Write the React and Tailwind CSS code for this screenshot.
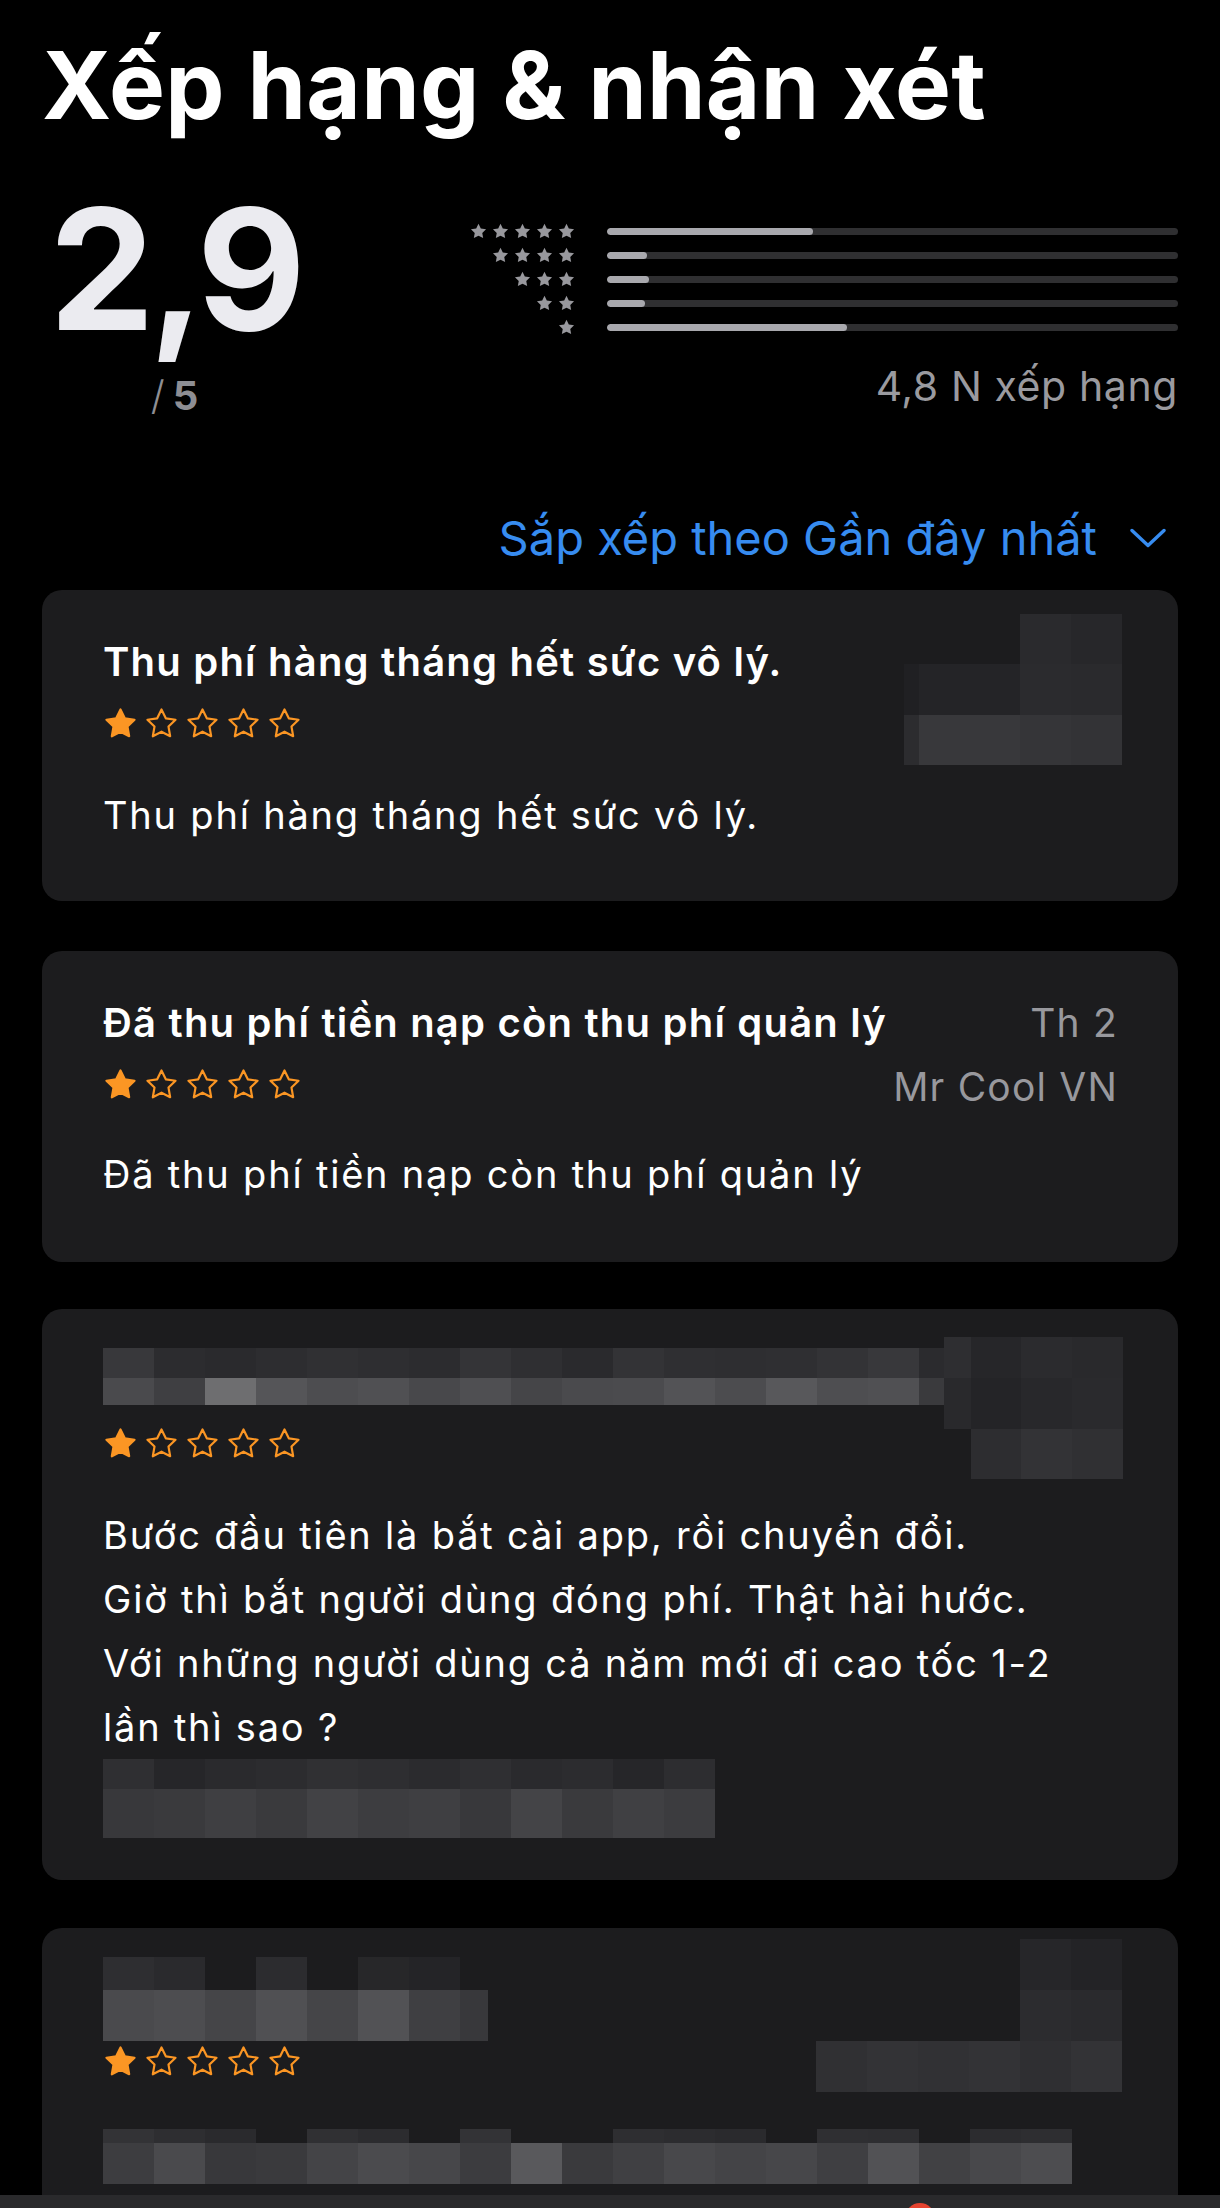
import React from 'react';

const STAR = 'M12 2.2l2.95 6.1 6.7.95-4.85 4.7 1.15 6.65L12 17.45l-5.95 3.15 1.15-6.65-4.85-4.7 6.7-.95L12 2.2z';

const ratingBars = [36, 7, 7.3, 6.6, 42];

// pixelated (censored) blocks, each row: height + list of [width, colour]
const blurCard1 = [
  { h: 50, t: [[116, null], [51, '#2a2a2d'], [51, '#27272a']] },
  { h: 51, t: [[15, '#202023'], [101, '#242427'], [51, '#2b2b2e'], [51, '#2a2a2d']] },
  { h: 50, t: [[15, '#2c2c2f'], [101, '#38383b'], [51, '#353538'], [51, '#333336']] },
];

const titleBlur3 = [
  {
    h: 30,
    t: ['#38383b', '#2c2c2f', '#2a2a2d', '#2d2d30', '#303033', '#2e2e31', '#2c2c2f', '#343437', '#2f2f32', '#2a2a2d', '#333336', '#2f2f32', '#2e2e31', '#2f2f32', '#333336', '#38383b'].map((c) => [51, c]).concat([[25, '#2b2b2e']]),
  },
  {
    h: 27,
    t: ['#4a4a4d', '#3f3f42', '#6e6e70', '#555558', '#4d4d50', '#505053', '#48484b', '#4f4f52', '#454548', '#4a4a4d', '#4b4b4e', '#535356', '#4c4c4f', '#58585b', '#4e4e51', '#505053'].map((c) => [51, c]).concat([[25, '#3a3a3d']]),
  },
];

const sideBlur3 = [
  { h: 41, t: [[27, '#2e2e31'], [50, '#262629'], [51, '#2b2b2e'], [51, '#29292c']] },
  { h: 51, t: [[27, '#29292c'], [50, '#242427'], [51, '#28282b'], [51, '#2a2a2d']] },
  { h: 50, t: [[27, null], [50, '#2d2d30'], [51, '#333336'], [51, '#303033']] },
];

const footBlur3 = [
  { h: 30, t: ['#2f2f32', '#262629', '#2a2a2d', '#2c2c2f', '#303033', '#2e2e31', '#2b2b2e', '#2f2f32', '#2a2a2d', '#2c2c2f', '#262629', '#2d2d30'].map((c) => [51, c]) },
  { h: 49, t: ['#38383b', '#3a3a3d', '#3f3f42', '#3a3a3d', '#424245', '#3d3d40', '#3f3f42', '#38383b', '#444447', '#3a3a3d', '#404043', '#3c3c3f'].map((c) => [51, c]) },
];

const titleBlur4 = [
  { h: 33, t: [[51, '#2e2e31'], [51, '#2a2a2d'], [51, null], [51, '#2c2c2f'], [51, null], [51, '#272729'], [51, '#242427'], [28, null]] },
  { h: 51, t: [[51, '#4a4a4d'], [51, '#4d4d50'], [51, '#454548'], [51, '#505053'], [51, '#454548'], [51, '#525255'], [51, '#3f3f42'], [28, '#38383b']] },
];

const sideBlur4 = [
  { h: 51, t: [[204, null], [51, '#262629'], [51, '#232326']] },
  { h: 51, t: [[204, null], [51, '#2c2c2f'], [51, '#2a2a2d']] },
  { h: 51, t: [[51, '#303033'], [51, '#333336'], [51, '#313134'], [51, '#333336'], [51, '#2f2f32'], [51, '#333336']] },
];

const lineBlur4 = [
  { h: 14, t: ['#333336', '#2e2e31', '#2a2a2d', null, '#303033', '#2c2c2f', null, '#333336', null, null, '#2e2e31', '#2c2c2f', '#2a2a2d', null, '#2f2f32', '#2e2e31', null, '#2c2c2f', '#2e2e31'].map((c) => [51, c]) },
  { h: 41, t: ['#3d3d40', '#4a4a4d', '#38383b', '#3a3a3d', '#444447', '#4b4b4e', '#47474a', '#3c3c3f', '#59595c', '#3a3a3d', '#404043', '#48484b', '#444447', '#47474a', '#3f3f42', '#525255', '#414144', '#48484b', '#4d4d50'].map((c) => [51, c]) },
];

const Pixels = ({ rows }) => (
  <div className="flex flex-col shrink-0">
    {rows.map((row, i) => (
      <div key={i} className="flex" style={{ height: row.h }}>
        {row.t.map(([w, c], j) => (
          <div key={j} style={{ width: w, background: c || 'transparent' }} />
        ))}
      </div>
    ))}
  </div>
);

const OrangeStars = () => (
  <div className="flex gap-[6px] h-[33px] items-center">
    {[0, 1, 2, 3, 4].map((i) => (
      <svg key={i} width="35" height="34" viewBox="0 0 24 23">
        <path
          d={STAR}
          fill={i === 0 ? '#fb9624' : 'none'}
          stroke="#fb9624"
          strokeWidth="1.5"
          strokeLinejoin="round"
        />
      </svg>
    ))}
  </div>
);

const GrayStars = ({ n }) => (
  <div className="flex gap-[3px]">
    {Array.from({ length: n }).map((_, i) => (
      <svg key={i} width="19" height="18" viewBox="0 0 24 23">
        <path d={STAR} fill="#98989d" />
      </svg>
    ))}
  </div>
);

const Card = ({ children, className = '' }) => (
  <div className={`bg-[#1c1c1e] pl-[61px] pr-[56px] ${className}`}>{children}</div>
);

const titleCls = 'text-[40px] leading-[46px] font-semibold tracking-[1.2px] whitespace-nowrap';
const bodyCls = 'text-[38px] tracking-[1.8px] whitespace-nowrap';

const App = () => {
  return (
    <div
      className="h-[2208px] overflow-hidden bg-black flex flex-col text-white"
      style={{ fontFamily: 'Inter, "Noto Sans", sans-serif' }}
    >
      <div className="flex-1 flex flex-col px-[42px] pt-[38px] min-h-0">
        {/* Heading */}
        <h1 className="text-[94px] leading-[94px] font-bold tracking-[0.3px] whitespace-nowrap">
          Xếp hạng &amp; nhận xét
        </h1>

        {/* Summary */}
        <div className="mt-[57px] flex">
          <div className="w-[265px] flex flex-col items-center">
            <div className="-mt-[4px] text-[168px] leading-[168px] font-bold tracking-[-6px] text-[#ebebf0]">2,9</div>
            <div className="mt-[23px] flex items-baseline text-[40px] leading-[40px] text-[#8e8e93]">
              <span className="font-light">/</span>
              <span className="ml-[8px] font-bold">5</span>
            </div>
          </div>
          <div className="flex-1 flex flex-col pt-[30px]">
            {ratingBars.map((pct, i) => (
              <div key={i} className="h-[24px] flex items-center">
                <div className="w-[269px] flex justify-end">
                  <GrayStars n={5 - i} />
                </div>
                <div className="ml-[31px] flex-1 h-[7px] rounded-full bg-[#2f2f31] overflow-hidden">
                  <div className="h-full rounded-full bg-[#a8a8ad]" style={{ width: `${pct}%` }} />
                </div>
              </div>
            ))}
            <div className="mt-[27px] text-right text-[41px] leading-[41px] tracking-[0.6px] text-[#9a9a9f] whitespace-nowrap">
              4,8 N xếp hạng
            </div>
          </div>
        </div>

        {/* Sort */}
        <div className="mt-[98px] flex justify-end items-center text-[#378cf0]">
          <span className="text-[47px] leading-[47px] whitespace-nowrap">Sắp xếp theo Gần đây nhất</span>
          <svg className="ml-[33px] mr-[12px]" width="36" height="20" viewBox="0 0 36 20" fill="none">
            <path d="M2 2.5l16 15 16-15" stroke="#378cf0" strokeWidth="3.4" strokeLinecap="round" strokeLinejoin="round" />
          </svg>
        </div>

        {/* Review 1 */}
        <Card className="mt-[29px] rounded-[20px] pt-[24px] pb-[54px]">
          <div className="flex justify-between">
            <div className="pt-[25px]">
              <div className={titleCls}>Thu phí hàng tháng hết sức vô lý.</div>
              <div className="mt-[21px]">
                <OrangeStars />
              </div>
            </div>
            <Pixels rows={blurCard1} />
          </div>
          <p className={`mt-[19px] leading-[63px] ${bodyCls}`}>Thu phí hàng tháng hết sức vô lý.</p>
        </Card>

        {/* Review 2 */}
        <Card className="mt-[50px] rounded-[20px] pt-[49px] pb-[56px]">
          <div className="flex justify-between items-start h-[100px]">
            <div>
              <div className={titleCls}>Đã thu phí tiền nạp còn thu phí quản lý</div>
              <div className="mt-[21px]">
                <OrangeStars />
              </div>
            </div>
            <div className="flex flex-col items-end pr-[4px] text-[39px] leading-[46px] tracking-[1.2px] text-[#98989d] whitespace-nowrap">
              <span>Th 2</span>
              <span className="mt-[18px]">Mr Cool VN</span>
            </div>
          </div>
          <p className={`mt-[43px] leading-[63px] ${bodyCls}`}>Đã thu phí tiền nạp còn thu phí quản lý</p>
        </Card>

        {/* Review 3 */}
        <Card className="mt-[47px] rounded-[20px] pt-[28px] pb-[42px]">
          <div className="flex justify-between">
            <div className="pt-[11px]">
              <Pixels rows={titleBlur3} />
              <div className="mt-[21px]">
                <OrangeStars />
              </div>
            </div>
            <Pixels rows={sideBlur3} />
          </div>
          <div className={`mt-[24px] leading-[64px] ${bodyCls}`}>
            <div>Bước đầu tiên là bắt cài app, rồi chuyển đổi.</div>
            <div>Giờ thì bắt người dùng đóng phí. Thật hài hước.</div>
            <div>Với những người dùng cả năm mới đi cao tốc 1-2</div>
            <div>lần thì sao ?</div>
          </div>
          <Pixels rows={footBlur3} />
        </Card>

        {/* Review 4 (cut off by the bottom bar) */}
        <Card className="mt-[48px] rounded-t-[20px] pt-[11px] flex-1 min-h-0 overflow-hidden">
          <div className="flex justify-between">
            <div className="pt-[18px]">
              <Pixels rows={titleBlur4} />
              <div className="mt-[3px]">
                <OrangeStars />
              </div>
            </div>
            <Pixels rows={sideBlur4} />
          </div>
          <div className="mt-[37px]">
            <Pixels rows={lineBlur4} />
          </div>
        </Card>
      </div>

      {/* bottom toolbar edge */}
      <div className="h-[13px] shrink-0 bg-[#2a2a2c] flex overflow-hidden">
        <div className="ml-[905px] mt-[8px] w-[30px] h-[30px] shrink-0 rounded-full bg-[#e5432f]" />
      </div>
    </div>
  );
};

export default App;
